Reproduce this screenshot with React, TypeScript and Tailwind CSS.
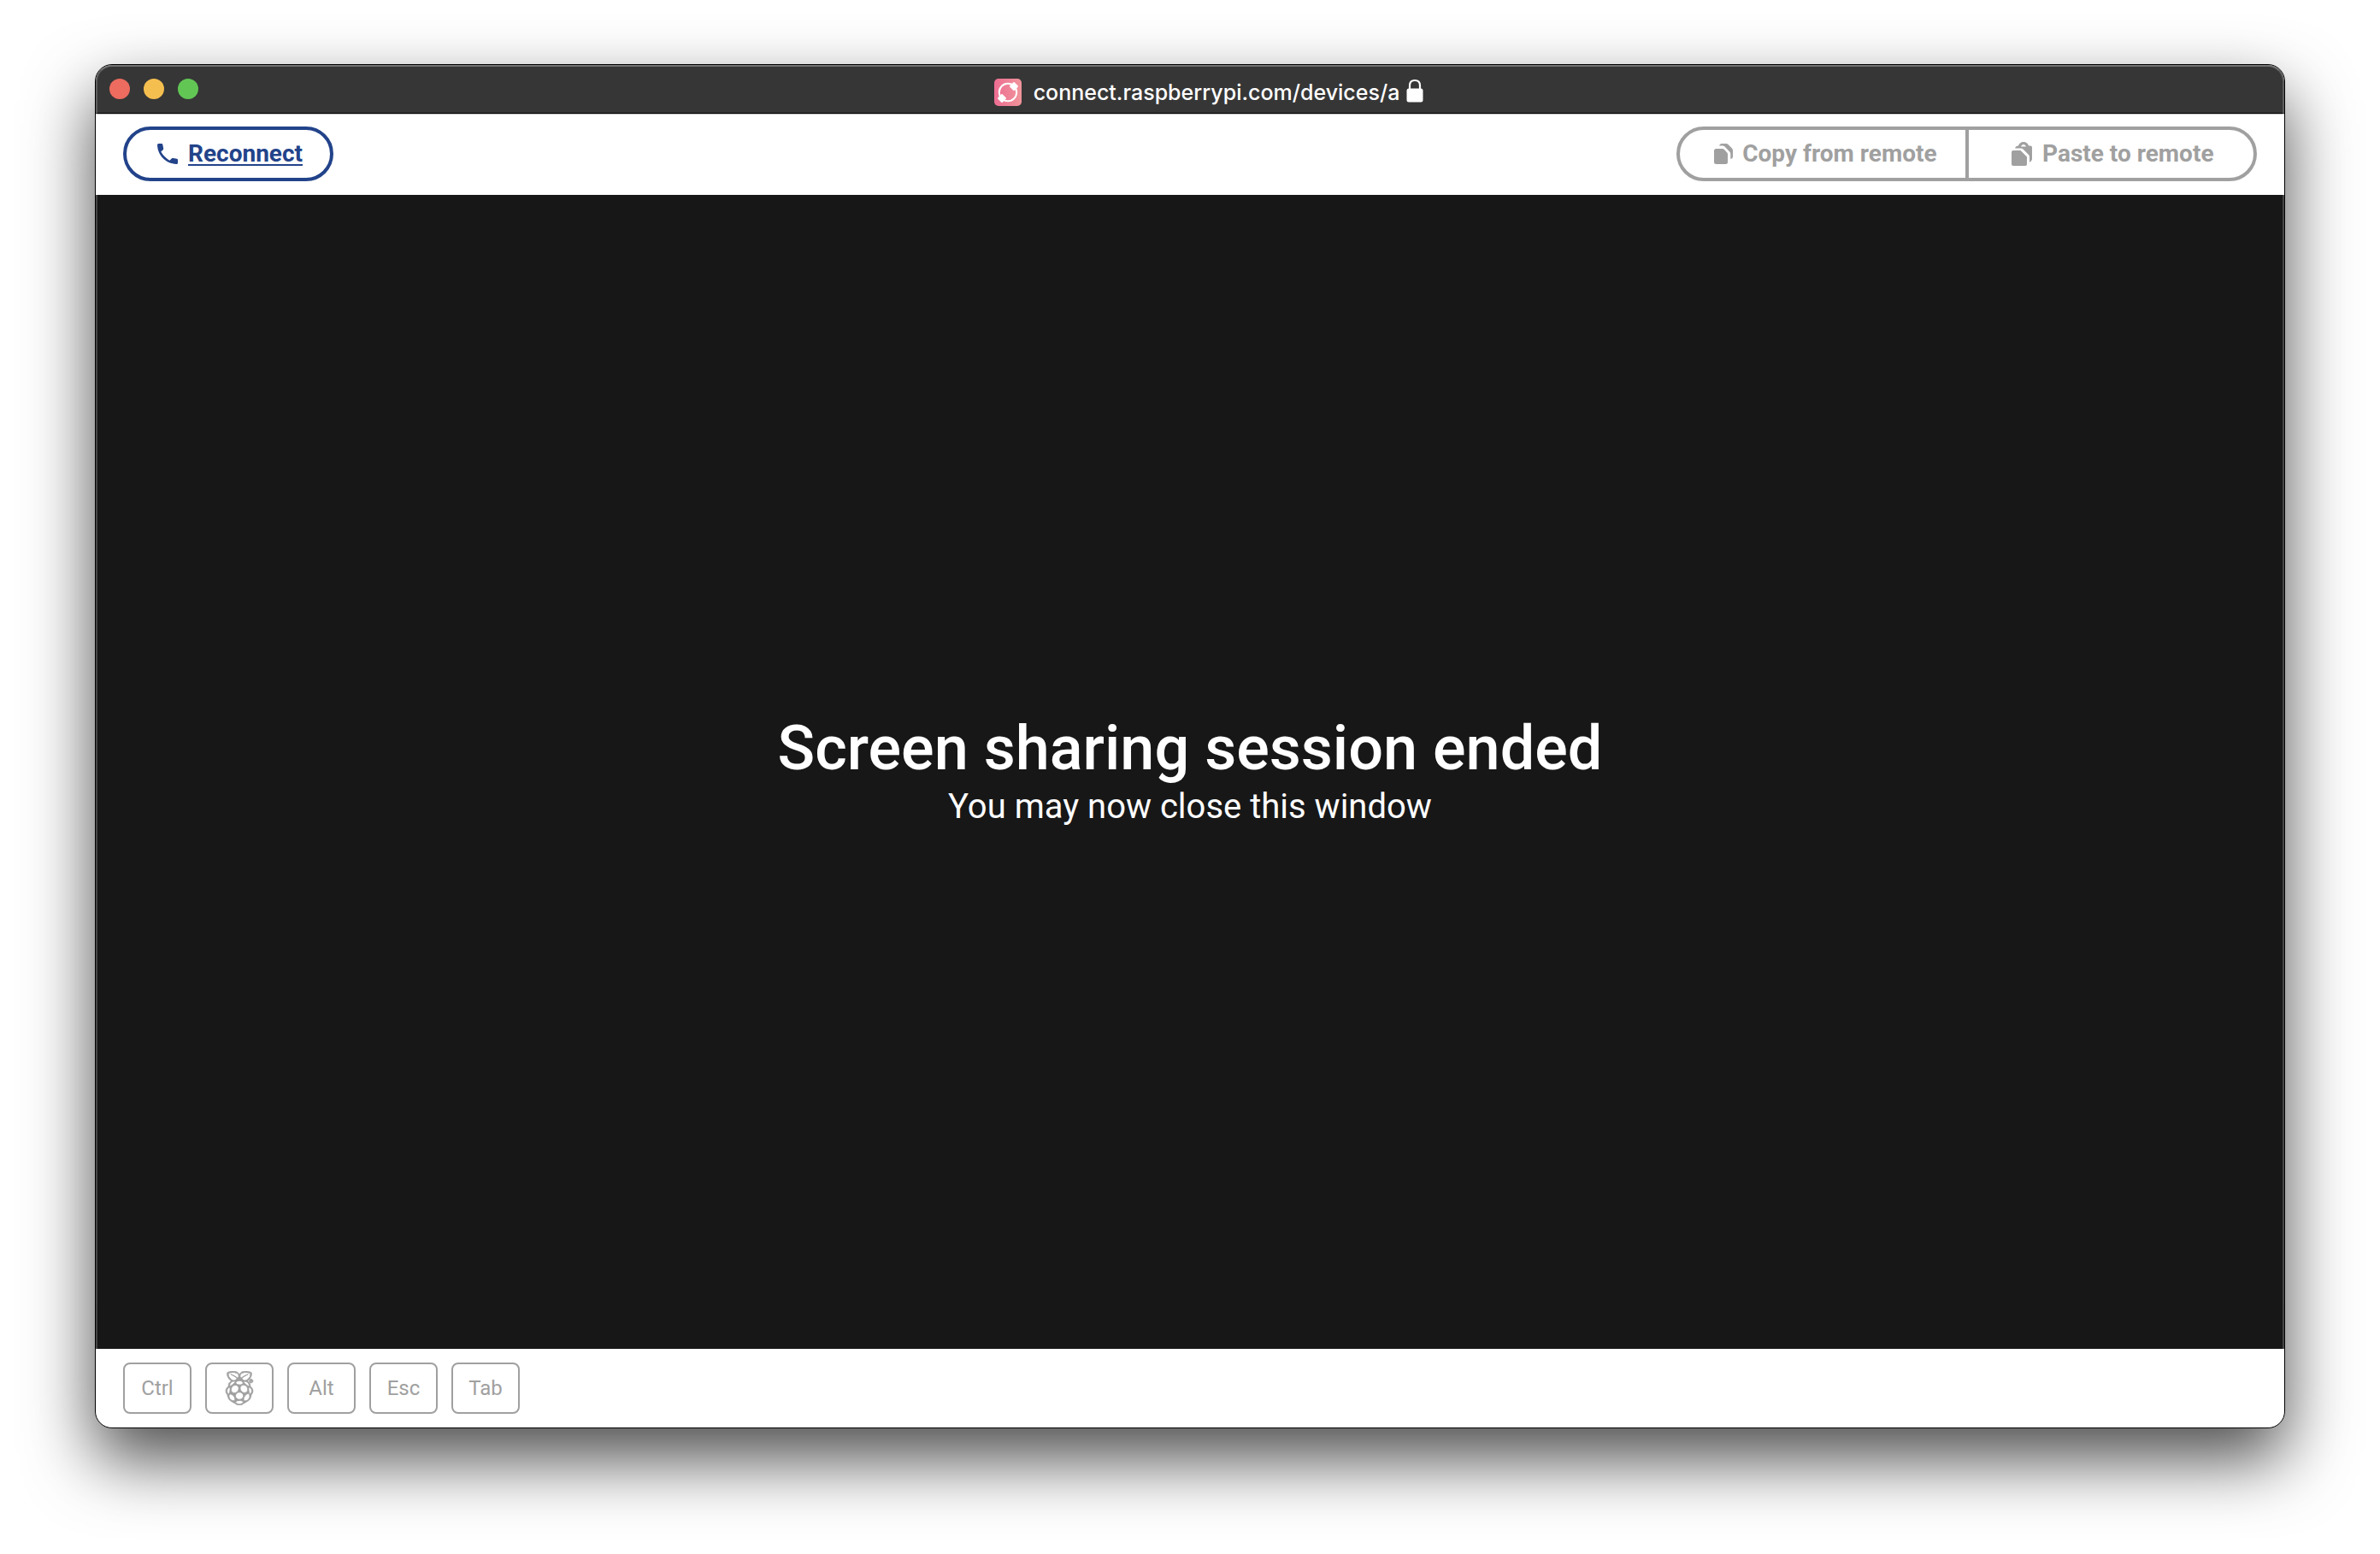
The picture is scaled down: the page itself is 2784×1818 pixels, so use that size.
import { SiRaspberrypi } from "react-icons/si";

const KEYS = ["Ctrl", "Raspberry Pi", "Alt", "Esc", "Tab"];

function ConnectLogo() {
  return (
    <svg viewBox="0 0 32 32" className="size-8" aria-hidden="true">
      <defs>
        <linearGradient id="connect-bg" x1="0" y1="0" x2="1" y2="0">
          <stop offset="0" stopColor="#ed6d92" />
          <stop offset="1" stopColor="#f0959b" />
        </linearGradient>
      </defs>
      <rect width="32" height="32" rx="5" fill="url(#connect-bg)" />
      <circle cx="16" cy="16" r="10.2" fill="none" stroke="#fff" strokeWidth="2" />
      <rect x="-3.8" y="-3.8" width="7.6" height="7.6" rx="1" fill="#fff" transform="translate(23 9) rotate(45)" />
      <rect x="-3.8" y="-3.8" width="7.6" height="7.6" rx="1" fill="#fff" transform="translate(9 23) rotate(45)" />
    </svg>
  );
}

function LockIcon() {
  return (
    <svg viewBox="0 0 20 28" className="h-7 w-5" aria-hidden="true">
      <rect x="0.5" y="11.5" width="19" height="16" rx="2.5" fill="currentColor" />
      <path d="M4 13V8Q4 2 10 2Q16 2 16 8V13" fill="none" stroke="currentColor" strokeWidth="2.2" />
    </svg>
  );
}

function PhoneIcon() {
  return (
    <svg viewBox="0 0 32 32" className="size-8 fill-current" aria-hidden="true">
      <path d="M5.5 4H9Q10 4 10.3 5L11.2 9.7Q11.3 10.7 10.7 11.3L8.3 13.6Q12 20 18.4 23.7L20.8 21.4Q21.5 20.7 22.5 20.9L27 21.7Q28 22 28 23V26.5Q28 28 26.5 28C13.5 27.4 4.5 17.5 4 5.5Q4 4 5.5 4Z" />
    </svg>
  );
}

function CopyIcon() {
  return (
    <svg viewBox="0 0 32 32" className="size-8 fill-current" aria-hidden="true">
      <path d="M9.5 10H16.5Q18 10 19 11L22 14.2Q23 15.3 23 16.5V25.5Q23 28 20.5 28H9.5Q7 28 7 25.5V12.5Q7 10 9.5 10Z" />
      <path d="M13 6.5Q13.5 4 16 4H21Q22.5 4 23.5 5L28 9.5Q29 10.5 29 12V19.5Q29 21.5 26.3 22V16Q26.3 14.5 25.2 13.4L19.5 7.5Q18.5 6.5 17 6.5Z" />
    </svg>
  );
}

function PasteIcon() {
  return (
    <svg viewBox="0 0 32 32" className="size-8 fill-current" aria-hidden="true">
      <path d="M6 12H14.5L22 19.5V28Q22 30 20 30H6Q4 30 4 28V14Q4 12 6 12Z" />
      <path fillRule="evenodd" d="M8 9.5Q9 6.5 12 6.5Q13.5 2 18 2Q22.5 2 24 6.5H26Q28 6.5 28 8.5V22Q28 24.5 25 26V19.5Q25 18 24 17L17.5 10.5Q16.5 9.5 15 9.5ZM15 7.5H21Q20.5 5 18 5Q15.5 5 15 7.5Z" />
    </svg>
  );
}

export default function App() {
  return (
    <div className="flex min-h-screen flex-col bg-white px-[111px] pt-[75px] pb-[147px] font-[Roboto,sans-serif]">
      <div className="relative flex flex-1 flex-col overflow-hidden rounded-[20px] border border-black bg-white shadow-[0_36px_80px_rgba(0,0,0,0.7)]">
        <div className="pointer-events-none absolute inset-0 rounded-[19px] border-2 border-white/20 border-t-white/30" />

        <header className="grid h-[57px] grid-cols-[1fr_auto_1fr] items-center border-b border-black bg-[#363636]">
          <div className="flex gap-4 pl-4">
            <button type="button" aria-label="Close" className="size-6 rounded-full bg-[#ed6b5f]" />
            <button type="button" aria-label="Minimise" className="size-6 rounded-full bg-[#f5bf50]" />
            <button type="button" aria-label="Zoom" className="size-6 rounded-full bg-[#62c655]" />
          </div>
          <div className="flex items-center pt-2 pl-11 text-white">
            <ConnectLogo />
            <span className="mr-2 ml-3.5 font-[Inter,sans-serif] text-[25px] leading-8 font-medium">connect.raspberrypi.com/devices/a</span>
            <div className="pb-1">
              <LockIcon />
            </div>
          </div>
        </header>

        <div className="flex items-center justify-between border-t border-[#c4c4c4] px-8 pt-3.5 pb-4 text-[28px] leading-8 font-bold">
          <a href="#reconnect" className="flex h-16 items-center gap-2 rounded-full border-4 border-[#22438a] px-8 text-[#22438a]">
            <PhoneIcon />
            <span className="underline decoration-2 underline-offset-3">Reconnect</span>
          </a>
          <div className="grid grid-cols-2 text-[#a0a0a0]">
            <button type="button" disabled className="-mr-0.5 flex h-16 items-center justify-center gap-2 rounded-l-full border-4 px-[33px]">
              <CopyIcon />
              Copy from remote
            </button>
            <button type="button" disabled className="-ml-0.5 flex h-16 items-center justify-center gap-2 rounded-r-full border-4 px-[33px]">
              <PasteIcon />
              Paste to remote
            </button>
          </div>
        </div>

        <main className="flex flex-1 flex-col items-center justify-center bg-[#171717] pt-0.5 text-center text-white">
          <h1 className="text-[72px] leading-[80px] font-medium">Screen sharing session ended</h1>
          <p className="text-[40px] leading-[56px]">You may now close this window</p>
        </main>

        <footer className="flex gap-4 px-8 py-4">
          {KEYS.map((key) => (
            <button
              key={key}
              type="button"
              disabled
              aria-label={key}
              className="flex h-15 w-20 items-center justify-center rounded-lg border-2 border-[#a0a0a0] text-2xl text-[#a0a0a0]"
            >
              {key === "Raspberry Pi" ? <SiRaspberrypi className="size-10 stroke-current stroke-[0.5]" aria-hidden="true" /> : key}
            </button>
          ))}
        </footer>
      </div>
    </div>
  );
}
